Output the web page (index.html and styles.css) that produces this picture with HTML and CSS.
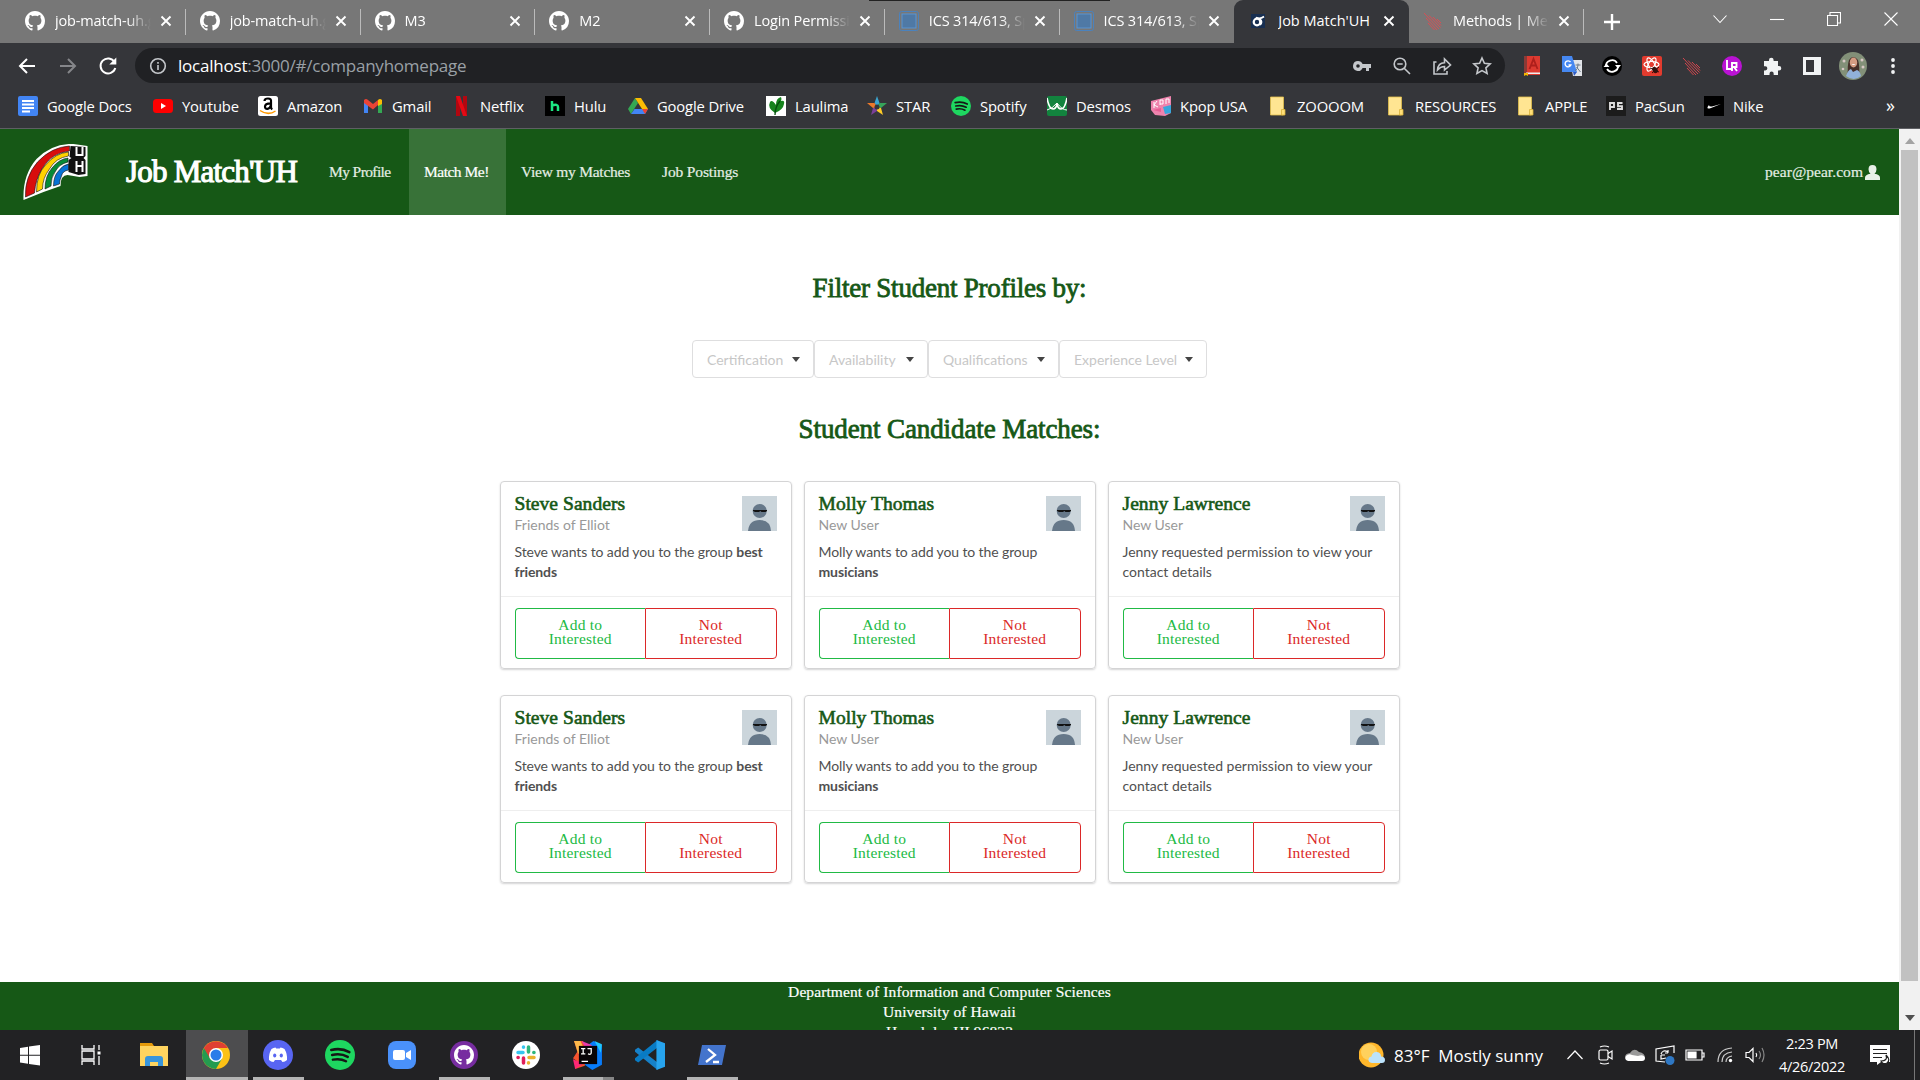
FILE: index.html
```html
<!DOCTYPE html>
<html lang="en">
<head>
<meta charset="utf-8">
<title>Job Match'UH</title>
<link rel="stylesheet" href="styles.css">
</head>
<body>
<svg width="0" height="0" class="defs">
  <symbol id="gh" viewBox="0 0 16 16"><path d="M8 0C3.58 0 0 3.58 0 8c0 3.54 2.29 6.53 5.47 7.59.4.07.55-.17.55-.38 0-.19-.01-.82-.01-1.49-2.01.37-2.53-.49-2.69-.94-.09-.23-.48-.94-.82-1.13-.28-.15-.68-.52-.01-.53.63-.01 1.08.58 1.23.82.72 1.21 1.87.87 2.33.66.07-.52.28-.87.51-1.07-1.78-.2-3.64-.89-3.64-3.95 0-.87.31-1.59.82-2.15-.08-.2-.36-1.02.08-2.12 0 0 .67-.21 2.2.82.64-.18 1.32-.27 2-.27s1.36.09 2 .27c1.53-1.04 2.2-.82 2.2-.82.44 1.1.16 1.92.08 2.12.51.56.82 1.27.82 2.15 0 3.07-1.87 3.75-3.65 3.95.29.25.54.73.54 1.48 0 1.07-.01 1.93-.01 2.2 0 .21.15.46.55.38A8.01 8.01 0 0 0 16 8c0-4.42-3.58-8-8-8z"/></symbol>
  <symbol id="x" viewBox="0 0 12 12"><path d="M1.5 1.5l9 9M10.5 1.5l-9 9" stroke="#fff" stroke-width="1.9" fill="none"/></symbol>
  <symbol id="ics" viewBox="0 0 20 20"><rect x=".5" y=".5" width="19" height="19" rx="2" fill="none" stroke="#4b82bd"/><rect x="3" y="3" width="14" height="14" fill="#4f79a5" stroke="#5b94d0"/></symbol>
  <symbol id="meteor" viewBox="0 0 20 20"><path d="M1 2l15 16M6 4.500l11.500 12M10 6l8 8.500M3 7l11 12M5 12l6.500 7M14 8l4 4" stroke="#e5484f" stroke-width=".9" fill="none"/></symbol>
  <symbol id="spot" viewBox="0 0 24 24"><circle cx="12" cy="12" r="12" fill="#1ed760"/><path d="M5 8q8-2 14.500 1.700M5.700 12q7-1.600 12.500 1.500M6.300 15.700q6-1.200 10.500 1.300" stroke="#161616" stroke-width="2" stroke-linecap="round" fill="none"/></symbol>
  <symbol id="folder" viewBox="0 0 20 20"><path d="M2.500 1h13v18h-13z" fill="#ffe592" stroke="#e3c04d" stroke-width=".8"/><path d="M13.500 13.500H17V19h-3.500z" fill="#ffdf78" stroke="#d9b23a" stroke-width=".8"/></symbol>
  <symbol id="person" viewBox="0 0 35 35"><path d="M0 0h35v35H0z" fill="#cbd5db"/><circle cx="17.700" cy="15" r="7" fill="#667889"/><path d="M6 35q1-11 11.700-11T29 35z" fill="#667889"/><path d="M11 14h14v1l-1.500 1h-4l-1.200-1-1.300 1h-4l-2-1z" fill="#111"/></symbol>
</svg>

<header class="tabs">
  <div class="tab"><svg class="fav"><use href="#gh"/></svg><span>job-match-uh.github.io</span><svg class="x"><use href="#x"/></svg></div>
  <div class="tab"><svg class="fav"><use href="#gh"/></svg><span>job-match-uh.github.io</span><svg class="x"><use href="#x"/></svg></div>
  <div class="tab"><svg class="fav"><use href="#gh"/></svg><span>M3</span><svg class="x"><use href="#x"/></svg></div>
  <div class="tab"><svg class="fav"><use href="#gh"/></svg><span>M2</span><svg class="x"><use href="#x"/></svg></div>
  <div class="tab"><svg class="fav"><use href="#gh"/></svg><span>Login Permissions</span><svg class="x"><use href="#x"/></svg></div>
  <div class="tab"><svg class="fav"><use href="#ics"/></svg><span>ICS 314/613, Spring</span><svg class="x"><use href="#x"/></svg></div>
  <div class="tab before"><svg class="fav"><use href="#ics"/></svg><span>ICS 314/613, Spring</span><svg class="x"><use href="#x"/></svg></div>
  <div class="tab active"><svg class="fav" viewBox="0 0 20 20"><path d="M3 3h14v14H3z" fill="#182f51"/><circle cx="9" cy="11" r="3.300" fill="none" stroke="#fff" stroke-width="2.200"/><path d="M8 6.500q4 2 8-1M12 8q3 3 0 6" stroke="#fff" stroke-width="1.700" fill="none"/></svg><span>Job Match'UH</span><svg class="x"><use href="#x"/></svg></div>
  <div class="tab"><svg class="fav"><use href="#meteor"/></svg><span>Methods | Meteor</span><svg class="x"><use href="#x"/></svg></div>
  <svg class="plus" viewBox="0 0 16 16"><path d="M8 0v16M0 8h16" stroke="#fff" stroke-width="2.400"/></svg>
  <div class="window-buttons">
    <svg viewBox="0 0 14 14"><path d="M.5 3.500L7 10.500l6.500-7"/></svg>
    <svg viewBox="0 0 14 14"><path d="M0 7.500h14"/></svg>
    <svg viewBox="0 0 14 14"><path d="M.5 3.500h10v10H.5zM3 3.500v-3h10.500V11H11"/></svg>
    <svg viewBox="0 0 14 14"><path d="M.5.5l13 13M13.500.5l-13 13"/></svg>
  </div>
  <div class="top-line"></div>
</header>

<div class="toolbar">
  <div class="history">
    <svg viewBox="0 0 20 20"><path d="M18 10H3M10 3l-7 7 7 7"/></svg>
    <svg viewBox="0 0 20 20" class="dim"><path d="M2 10h15M10 3l7 7-7 7"/></svg>
    <svg viewBox="0 0 20 20"><path d="M16.500 6A7.500 7.500 0 1 0 17.300 12"/><path d="M18.300 1.500v7h-7z" fill="#fff" stroke="none"/></svg>
  </div>
  <div class="omnibox">
    <svg viewBox="0 0 18 18" class="info"><circle cx="9" cy="9" r="7.300"/><path d="M9 8v5M9 5v1.700"/></svg>
    <div class="url"><b>localhost</b>:3000/#/companyhomepage</div>
    <svg viewBox="0 0 20 20"><g fill="#c4c7cb" stroke="none"><path fill-rule="evenodd" d="M6 5a5 5 0 1 0 4.600 7H14v3h3v-3h2V8h-8.400A5 5 0 0 0 6 5zm0 3.200a1.800 1.800 0 1 1 0 3.600 1.800 1.800 0 0 1 0-3.600z"/></g></svg>
    <svg viewBox="0 0 20 20"><circle cx="8" cy="8" r="5.800"/><path d="M12.200 12.200L18 18M5.300 8h5.400"/></svg>
    <svg viewBox="0 0 20 20"><path d="M4.500 6H2v12h13v-3M5.500 14q.5-7 7-7.200V3L18.500 9l-6 5v-3.500q-4 0-7 3.500z"/></svg>
    <svg viewBox="0 0 20 20"><path d="M10 2l2.400 5.300 5.800.6-4.300 3.900 1.200 5.700-5.100-2.900-5.100 2.900 1.200-5.700L1.800 7.900l5.800-.6z"/></svg>
  </div>
  <div class="extensions">
    <svg viewBox="0 0 20 20"><path d="M2 0h16v19H2z" fill="#dc3a30"/><path d="M2 0h3v19H2z" fill="#8b3a36"/><path d="M4 16.500h14v1.500H4z" fill="#eee"/><path d="M2 17h4v3l-2-1-2 1z" fill="#f5b400"/><path d="M7.500 13L11.500 3l4 10M9 9.500h5" stroke="#ad1f1b" stroke-width="1.800" fill="none"/></svg>
    <svg viewBox="0 0 20 20"><path d="M8 4h12v16H11z" fill="#e2e5e9"/><path d="M0 0h10l5 16H0z" fill="#4688f1"/><path d="M11 16h4l-3 4z" fill="#2f5bc2"/><path d="M8.500 6a3 3 0 1 0 .4 3H6.500" stroke="#fff" stroke-width="1.400" fill="none"/><path d="M13.500 9h5M16 7.500V9q0 4-3 6M14.500 11l4 5" stroke="#6d7b8b" fill="none"/></svg>
    <svg viewBox="0 0 20 20"><circle cx="10" cy="10" r="10" fill="#000"/><path d="M4 11a6 6 0 0 1 11-4M16 9a6 6 0 0 1-11 4" fill="none" stroke="#fff" stroke-width="1.700"/><path d="M13 9h6l-3 3.500zM1.500 11h6l-3-3.500z" fill="#fff"/></svg>
    <svg viewBox="0 0 20 20"><rect width="20" height="20" rx="2" fill="#e23b2e"/><g fill="none" stroke="#fff" stroke-width="1.200"><ellipse cx="9.500" cy="8.500" rx="7.500" ry="3"/><ellipse cx="9.500" cy="8.500" rx="7.500" ry="3" transform="rotate(60 9.500 8.500)"/><ellipse cx="9.500" cy="8.500" rx="7.500" ry="3" transform="rotate(120 9.500 8.500)"/></g><ellipse cx="13" cy="14" rx="2.400" ry="3.500" fill="#31100d" transform="rotate(-35 13 14)"/><path d="M8 12l9 4M10 17l7-6" stroke="#31100d"/></svg>
    <svg viewBox="0 0 20 20"><use href="#meteor"/></svg>
    <svg viewBox="0 0 20 20"><circle cx="10" cy="10" r="10" fill="#b912d3"/><path d="M5 4v9h5M10 15V7h4.500v4H10M12 11l3 4" stroke="#fff" stroke-width="1.900" fill="none"/></svg>
    <svg viewBox="0 0 20 20"><path d="M2 5h5V4a2.300 2.300 0 0 1 4.600 0v1H16v5h1a2.300 2.300 0 0 1 0 4.600h-1V19h-4.300v-1.300a2.100 2.100 0 0 0-4.200 0V19H2v-4.600h1.300a2 2 0 0 0 0-4.100H2z" fill="#f1f3f4"/></svg>
    <svg viewBox="0 0 20 20"><path fill-rule="evenodd" d="M1 1h18v18H1zm3 3v12h8V4z" fill="#f1f3f4"/></svg>
    <svg viewBox="0 0 28 28" class="avatar"><circle cx="14" cy="14" r="14" fill="#829078"/><path d="M9 25q-1-11 1-17 4-6 9 0 2 6 1 17z" fill="#47302a"/><ellipse cx="14.500" cy="10.500" rx="3.700" ry="5" fill="#d69d83"/><path d="M7 24q2-6 5-7l2 3 4-2q3 1 4 6-7 6-15 0z" fill="#91b1da"/><path d="M12.500 12q2 2 4 0z" fill="#fff"/><g fill="#d8c8c5"><circle cx="5" cy="9" r="1.500"/><circle cx="23" cy="8" r="1.500"/><circle cx="24" cy="15" r="1.500"/><circle cx="4" cy="17" r="1.300"/></g></svg>
    <svg viewBox="0 0 20 20" class="dots"><g fill="#f1f3f4"><circle cx="10" cy="4" r="1.900"/><circle cx="10" cy="10" r="1.900"/><circle cx="10" cy="16" r="1.900"/></g></svg>
  </div>
</div>

<nav class="bookmarks">
  <a><svg viewBox="0 0 20 20"><rect width="20" height="20" rx="2" fill="#4285f4"/><path d="M4 5h12M4 8.500h12M4 12h12M4 15.500h8" stroke="#fff" stroke-width="1.800"/></svg>Google Docs</a>
  <a><svg viewBox="0 0 20 20"><rect y="3" width="20" height="14" rx="3.500" fill="#f00"/><path d="M8 7l5 3-5 3z" fill="#fff"/></svg>Youtube</a>
  <a><svg viewBox="0 0 20 20"><rect width="20" height="20" rx="2.500" fill="#fff"/><path d="M6.500 5q0-2.500 3.500-2.500T13 5.500V11q0 1.500 1.200 2.500M13 7.300q-6 0-6 3.200 0 2.500 2.500 2.300T13 9" fill="none" stroke="#000" stroke-width="2.200"/><path d="M2 14.500q8 5.500 15.500.5" stroke="#f90" stroke-width="1.500" fill="none"/></svg>Amazon</a>
  <a><svg viewBox="0 0 20 20"><path d="M1 4h4v13H1z" fill="#4285f4"/><path d="M15 4h4v13h-4z" fill="#34a853"/><path d="M1 4q2-2 4 0l5 4 5-4v5l-5 4.500L1 7z" fill="#ea4335"/><path d="M15 4q2-2 4 0v4l-4 2z" fill="#fbbc04"/></svg>Gmail</a>
  <a><svg viewBox="0 0 20 20"><path d="M5 0h4v20H5zM12 0h4v20h-4z" fill="#b20710"/><path d="M5 0h4l7 20h-4z" fill="#e50914"/></svg>Netflix</a>
  <a><svg viewBox="0 0 20 20"><path d="M0 0h20v20H0z" fill="#000"/><path d="M7 5v10M7 9.500q6-2 6 1.500v4" stroke="#1ce783" stroke-width="2.500" fill="none"/></svg>Hulu</a>
  <a><svg viewBox="0 0 20 20"><path d="M7 2L0 13l3 5 7-11z" fill="#34a853"/><path d="M7 2h6l7 11h-6z" fill="#fbbc04"/><path d="M3 18l3.500-5H20l-3 5z" fill="#4285f4"/><path d="M14 13h6l-3 5z" fill="#ea4335"/></svg>Google Drive</a>
  <a><svg viewBox="0 0 20 20"><path d="M0 0h20v20H0z" fill="#fff"/><path d="M9 17Q1 12 4 6q2-3 6 3 0-7 5-8 1 2 0 4 4-1 3 3-1 6-9 9z" fill="#16831d"/><path d="M9 19q0-8 5-14" stroke="#054d0d" stroke-width="1.300" fill="none"/></svg>Laulima</a>
  <a><svg viewBox="0 0 20 20"><path d="M10 0l2.500 7L10 11 7.500 7z" fill="#3ba4cf"/><path d="M20 7l-6 5-4-1 2.500-4z" fill="#36a45a"/><path d="M16 19l-6-4v-4l4 1z" fill="#ffcc26"/><path d="M4 19l2-7 4-1v4z" fill="#7b4099"/><path d="M0 7h7.500L10 11l-4 1z" fill="#eb792b"/><circle cx="10" cy="11" r="2.500" fill="#35363a"/></svg>STAR</a>
  <a><svg viewBox="0 0 24 24"><use href="#spot"/></svg>Spotify</a>
  <a><svg viewBox="0 0 20 20"><rect width="20" height="20" rx="2" fill="#12833e"/><path d="M0 2q2 11 6 11 3 0 4-5 1 5 4 5 4 0 6-11" stroke="#fff" stroke-width="1.600" fill="none"/><path d="M0 14q5-1 10-7 5 7 10 7" stroke="#fff" fill="none"/></svg>Desmos</a>
  <a><svg viewBox="0 0 20 20"><path d="M0 5L20 0v17l-6 3-10-1-4-5z" fill="#ee83ad"/><path d="M12 11l8-2v8l-6 1z" fill="#37a6dc"/><path d="M3 6v6M6 5l-3 4 4 2M9 9V4h3v4H9M15 8V3h3v4" stroke="#fff" fill="none"/><path d="M2 14l8-2v4z" fill="#e85d94"/></svg>Kpop USA</a>
  <a><svg><use href="#folder"/></svg>ZOOOOM</a>
  <a><svg><use href="#folder"/></svg>RESOURCES</a>
  <a><svg><use href="#folder"/></svg>APPLE</a>
  <a><svg viewBox="0 0 20 20"><path d="M0 0h20v20H0z" fill="#1c1c1c"/><path d="M4 14V7h4v4H4M16.500 7H12v3.300h4V13h-5" stroke="#ddd" stroke-width="1.900" fill="none"/></svg>PacSun</a>
  <a><svg viewBox="0 0 20 20"><path d="M0 0h20v20H0z" fill="#000"/><path d="M5 9q-4 5 2 3l10-4-9 2.500q-3 .5-3-1.500z" fill="#fff"/></svg>Nike</a>
  <a class="more">»</a>
</nav>

<div class="viewport">
  <main class="page">
    <nav class="site-nav">
      <svg class="logo" viewBox="0 0 64 56">
        <path d="M0 56Q-1 31 13 15 29-1 50 0l14 2v30l-8 1-12-2q-7 0-7 11L20 48z" fill="#fff"/>
        <path d="M2 53Q1 33 14 18 28 3 46 2v5Q28 9 19 24 12 35 11 49z" fill="#d80d0d" stroke="#111" stroke-width=".6"/>
        <path d="M13 48q0-18 9-27Q32 9 45 8v4Q32 14 26 25q-7 9-7 20z" fill="#ffd200" stroke="#111" stroke-width=".6"/>
        <path d="M21.500 45q0-13 7-21 7-9 16-10v4q-9 2-13 10-4 5-4 14z" fill="#078a37" stroke="#111" stroke-width=".6"/>
        <path d="M30 42q0-10 5-15 4-6 10-7v6q-6 1-7 6-2 4-2 8z" fill="#0872d4" stroke="#111" stroke-width=".6"/>
        <path d="M47 2l15 1v9l-2 2 2 2v14l-7 1-10-3V16l3-2-2-1z" fill="#111"/>
        <path d="M53 3v8h6V3M53 17v11M59 17v11M53 22h6" stroke="#fff" stroke-width="2" fill="none"/>
      </svg>
      <h1>Job Match'UH</h1>
      <a class="n1">My Profile</a><a class="n2 current">Match Me!</a><a class="n3">View my Matches</a><a class="n4">Job Postings</a>
      <div class="user"><span>pear@pear.com</span><svg viewBox="0 0 15 15"><path d="M7.500 0q4 0 4 4.300 0 2.700-2 4.500 5.500.8 5.500 4V15H0v-2.200q0-3.200 5.500-4-2-1.800-2-4.500Q3.500 0 7.500 0z"/></svg></div>
    </nav>
    <h2 class="filter-title">Filter Student Profiles by:</h2>
    <div class="filters">
      <div class="f1">Certification<i></i></div><div class="f2">Availability<i></i></div><div class="f3">Qualifications<i></i></div><div class="f4">Experience Level<i></i></div>
    </div>
    <h2 class="match-title">Student Candidate Matches:</h2>
    <section class="cards">
      <article><div class="content"><svg class="face"><use href="#person"/></svg><h3>Steve Sanders</h3><small>Friends of Elliot</small><p class="tight">Steve wants to add you to the group <b>best friends</b></p></div><div class="buttons"><button class="add">Add to<br>Interested</button><button class="not">Not<br>Interested</button></div></article>
      <article><div class="content"><svg class="face"><use href="#person"/></svg><h3>Molly Thomas</h3><small>New User</small><p class="tight">Molly wants to add you to the group <b>musicians</b></p></div><div class="buttons"><button class="add">Add to<br>Interested</button><button class="not">Not<br>Interested</button></div></article>
      <article><div class="content"><svg class="face"><use href="#person"/></svg><h3>Jenny Lawrence</h3><small>New User</small><p>Jenny requested permission to view your contact details</p></div><div class="buttons"><button class="add">Add to<br>Interested</button><button class="not">Not<br>Interested</button></div></article>
      <article><div class="content"><svg class="face"><use href="#person"/></svg><h3>Steve Sanders</h3><small>Friends of Elliot</small><p class="tight">Steve wants to add you to the group <b>best friends</b></p></div><div class="buttons"><button class="add">Add to<br>Interested</button><button class="not">Not<br>Interested</button></div></article>
      <article><div class="content"><svg class="face"><use href="#person"/></svg><h3>Molly Thomas</h3><small>New User</small><p class="tight">Molly wants to add you to the group <b>musicians</b></p></div><div class="buttons"><button class="add">Add to<br>Interested</button><button class="not">Not<br>Interested</button></div></article>
      <article><div class="content"><svg class="face"><use href="#person"/></svg><h3>Jenny Lawrence</h3><small>New User</small><p>Jenny requested permission to view your contact details</p></div><div class="buttons"><button class="add">Add to<br>Interested</button><button class="not">Not<br>Interested</button></div></article>
    </section>
    <footer><span>Department of Information and Computer Sciences</span><br><span>University of Hawaii</span><br><span>Honolulu, HI 96822</span></footer>
  </main>
  <aside class="scroll"><svg viewBox="0 0 10 6"><path d="M5 0l5 6H0z" fill="#a3a3a3"/></svg><div class="thumb"></div><svg viewBox="0 0 10 6"><path d="M0 0h10L5 6z" fill="#505050"/></svg></aside>
</div>

<footer class="taskbar">
  <div class="apps">
    <div><svg viewBox="0 0 28 28"><path d="M4 7l8-1.200v8H4zM13 5.600L24 4v9.800H13zM4 14.800h8v8L4 21.600zM13 14.800h11v9.700l-11-1.500z" fill="#fff"/></svg></div>
    <div><svg viewBox="0 0 28 28"><path d="M4 4v4h12V4M4 24v-4h12v4M4 10h12v8H4zM21 4v5M21 15v9" fill="none" stroke="#fff" stroke-width="1.300"/><path d="M19.500 10.500h3v3h-3z" fill="#fff"/></svg></div>
    <div><svg viewBox="0 0 28 28"><path d="M0 2h12l2 3H0z" fill="#e59a0a"/><path d="M0 5h28v20H0z" fill="#ffd45f"/><path d="M5 25v-7q0-3 3-3h12q3 0 3 3v7h-5v-4h-8v4z" fill="#3895db"/></svg></div>
    <div class="on open"><svg viewBox="0 0 28 28"><circle cx="14" cy="14" r="14" fill="#fbc116"/><path d="M14 14L1.900 7A14 14 0 0 0 14 28l6-10.500z" fill="#249b50"/><path d="M1.900 7A14 14 0 0 1 26 7H14l-6 10.500z" fill="#df4032"/><circle cx="14" cy="14" r="7" fill="#fff"/><circle cx="14" cy="14" r="5.500" fill="#2b7de9"/></svg></div>
    <div class="open"><svg class="round" viewBox="0 0 30 30"><circle cx="15" cy="15" r="15" fill="#5865f2"/><path d="M8.500 9q2-1.500 4-1.500l.7 1h3.600l.7-1q2 0 4 1.500 3 5 2.500 11-2 2-4.500 2L18 20h-6l-1.500 2Q8 22 6 20q-.5-6 2.500-11z" fill="#fff"/><ellipse cx="11.700" cy="15.500" rx="1.600" ry="2" fill="#5865f2"/><ellipse cx="18.300" cy="15.500" rx="1.600" ry="2" fill="#5865f2"/></svg></div>
    <div><svg class="round" viewBox="0 0 24 24"><use href="#spot"/></svg></div>
    <div><svg viewBox="0 0 28 28"><rect width="28" height="28" rx="8" fill="#4a91fa"/><rect x="5" y="9" width="12" height="10" rx="2" fill="#fff"/><path d="M18 12l5-3v10l-5-3z" fill="#fff"/></svg></div>
    <div class="open"><svg viewBox="0 0 28 28"><circle cx="14" cy="14" r="14" fill="#772da0"/><use href="#gh" x="4" y="4" width="20" height="20" fill="#fff"/></svg></div>
    <div><svg viewBox="0 0 28 28"><circle cx="14" cy="14" r="14" fill="#fff"/><g fill="none" stroke-width="3.500" stroke-linecap="round"><path d="M6 11.500h5M11.500 6v.2" stroke="#36c5f0"/><path d="M16.500 6v5M22 11.500h-.2" stroke="#2eb67d"/><path d="M17 16.500h5M16.500 22v-.2" stroke="#ecb22e"/><path d="M11.500 17v5M6 16.500h.2" stroke="#e01e5a"/></g></svg></div>
    <div class="open split"><svg class="round" viewBox="0 0 28 28"><path d="M1 1h8l5 5-3 18-9 3 2-7-4-3 4-6z" fill="#f6532f"/><path d="M1 1h6l3 7-5 5z" fill="#fdb94b"/><path d="M0 18l10 4-8 5z" fill="#fe2775"/><path d="M15 4l4-3 8 4v18l-9 5-7-5z" fill="#087cfa"/><path d="M8 1l10 4-6 3z" fill="#e93cab"/><path d="M20 1l7 3-1 8z" fill="#20c7fb"/><path d="M5.500 5.500h17v17h-17z" fill="#080407"/><path d="M7.500 8h4M9.500 8v5M7.500 13h4M13.500 8h3.500v4q0 2-3 1M8 20h6" stroke="#fff" stroke-width="1.200" fill="none"/></svg></div>
    <div><svg class="round" viewBox="0 0 28 28"><path d="M0 9l3-2 18 14v7L0 11z" fill="#1681c9"/><path d="M0 19l3 2L21 7V0L0 17z" fill="#087bc4"/><path d="M20 0l8 3v22l-8 3z" fill="#27a4ee"/></svg></div>
    <div class="open"><svg viewBox="0 0 28 28"><path d="M4 4h24l-4 20H0z" fill="#4374cc"/><path d="M10 8l7 6-9 7M15 21h6" stroke="#fff" stroke-width="2.300" fill="none"/></svg></div>
  </div>
  <div class="tray">
    <svg class="weather" viewBox="0 0 26 28"><circle cx="12" cy="14" r="12.500" fill="#ffb72b"/><circle cx="10" cy="11" r="8" fill="#ffd15d"/><path d="M13 22q-4-.5-3.500-4 .5-2.500 3-2.500 1-5 5.500-4.500 4 .5 4 4.500 4 0 4 3.500t-4 3z" fill="#bce3fc"/></svg>
    <span class="temp">83°F&nbsp; Mostly sunny</span>
    <svg viewBox="0 0 20 20"><path d="M2.500 14l7.500-8 7.500 8"/></svg>
    <svg viewBox="0 0 20 20"><rect x="4" y="5" width="9" height="10" rx="1.500"/><path d="M13 8.500L17 6v8l-4-2.500M5 2q4.500-2 9 0M5 18q4.500 2 9 0"/></svg>
    <svg viewBox="0 0 20 20"><path d="M1 15q-3-6 4-7 4-6 9-1 6 1 6 6z" fill="#999" stroke="none"/><path d="M3 16q-4-1-2-5 3-3 6-1l6 1q6-2 7 2 0 3-3 3z" fill="#fff" stroke="none"/></svg>
    <svg viewBox="0 0 20 20"><path d="M19 8V1L1 4v12l9 1M6 9q2-5 7-2V5M13 8h-3M6 10h4M6 10v4l5-1"/><circle cx="15" cy="15.500" r="4.500" fill="#2f78c4" stroke="none"/></svg>
    <svg viewBox="0 0 20 20"><path d="M1 5h16v10H1zM17 8h2v4h-2"/><path d="M3 7h8v6H3z" fill="#fff"/></svg>
    <svg viewBox="0 0 20 20"><path d="M3 17Q3 4 17 3M7 17q0-9 10-10M11 17q0-5 6-6" stroke="#ccc"/><circle cx="15.500" cy="15.500" r="1.700" fill="#fff" stroke="none"/></svg>
    <svg viewBox="0 0 20 20"><path d="M1 7.500h3l4-4v13l-4-4H1z"/><path d="M11 8q1.500 2 0 4"/><path d="M14 6q3 4 0 8M17 3q4 7 0 14" stroke="#888"/></svg>
    <div class="clock">2:23 PM<br>4/26/2022</div>
    <svg class="notice" viewBox="0 0 22 22"><path d="M1 1h20v17h-9l-4 3v-3H1z" fill="#fff" stroke="none"/><path d="M4 5.500h14M4 9.500h14M4 13.500h9" stroke="#222"/><path d="M17 11q2 6-5 6 2 4 6 2 4-3-1-8z" fill="#fff" stroke="#222"/></svg>
    <div class="desktop"></div>
  </div>
</footer>
</body>
</html>
```
FILE: styles.css
```css
* { box-sizing: border-box; }
body { margin: 0; width: 1920px; height: 1080px; overflow: hidden; display: flex; flex-direction: column; font-family: "Open Sans", sans-serif; background: #fff; }
svg { display: block; flex: none; }
.defs { display: none; }
h1, h2, h3, p { margin: 0; font-weight: 400; }

.tabs { height: 43px; flex: none; background: #777; display: flex; align-items: center; padding-left: 11px; color: #fff; position: relative; }
.top-line { position: absolute; top: 0; left: 869px; width: 241px; height: 1px; background: #222; }
.tab { width: 174.75px; height: 43px; flex: none; display: flex; align-items: center; padding: 0 14px 1px; position: relative; font-size: 14.500px; letter-spacing: -.15px; }
.tab::after { content: ""; position: absolute; right: 0; top: 9px; width: 1px; height: 26px; background: #bbb; }
.tab .fav { width: 20px; height: 20px; fill: #fff; }
.tab span { width: 96px; margin-left: 10px; padding-bottom: 1px; white-space: nowrap; overflow: hidden; -webkit-mask-image: linear-gradient(90deg, #000 75%, transparent 100%); }
.tab .x { width: 12px; height: 12px; margin-left: 9px; }
.tab.before::after, .tab.active::after { display: none; }
.tab.active { background: #35363a; border-radius: 9px 9px 0 0; }
.tab.active span { -webkit-mask-image: none; letter-spacing: 0; }
.plus { width: 16px; height: 16px; margin-left: 20px; }
.window-buttons { display: flex; gap: 43px; margin-left: auto; margin-right: 22px; padding-bottom: 6px; }
.window-buttons svg { width: 14px; height: 14px; fill: none; stroke: #fff; stroke-width: 1.100; }

.toolbar { height: 46px; flex: none; background: #35363a; display: flex; align-items: center; padding-bottom: 1px; }
.history { display: flex; gap: 20.500px; width: 135px; padding-left: 17px; }
.history svg { width: 20px; height: 20px; fill: none; stroke: #fff; stroke-width: 2; }
.history .dim { stroke: #85868a; }
.omnibox { width: 1370px; height: 35px; border-radius: 18px; background: #202124; display: flex; align-items: center; gap: 20px; padding: 0 13px; }
.omnibox svg { width: 20px; height: 20px; fill: none; stroke: #c4c7cb; stroke-width: 1.600; }
.omnibox .info { width: 18px; height: 18px; margin-left: 1px; }
.url { flex: 1; margin-left: -9px; padding-bottom: 1px; color: #9aa0a6; font-size: 17px; letter-spacing: -.22px; }
.url b { color: #fff; font-weight: 400; }
.extensions { display: flex; align-items: center; gap: 20px; padding-left: 17px; }
.extensions svg { width: 20px; height: 20px; }
.extensions .avatar { width: 28px; height: 28px; margin: 0 -3px 0 -3px; }
.extensions .dots { margin-left: -1px; }

.bookmarks { height: 40px; flex: none; background: #35363a; border-bottom: 1px solid #5f6064; display: grid; grid-template-columns: 135px 105px 105px 88px 94px 83px 138px 101px 84px 96px 104px 117px 118px 130px 90px 98px 182px 20px; padding: 0 0 6px 18px; color: #fff; font-size: 14.800px; letter-spacing: -.15px; }
.bookmarks a { display: flex; align-items: center; gap: 9px; white-space: nowrap; }
.bookmarks svg { width: 20px; height: 20px; }
.bookmarks .more { font-size: 18px; padding-bottom: 2px; }

.viewport { flex: 1; min-height: 0; display: flex; overflow: hidden; }
.page { width: 1899px; font-family: Lato, sans-serif; }
.site-nav { height: 86px; background: #165816; display: flex; align-items: center; color: #e4eee4; font: 15.500px "Liberation Serif", serif; letter-spacing: -.25px; -webkit-text-stroke: .2px; }
.logo { width: 65px; height: 56px; margin-left: 23px; }
.site-nav h1 { width: 171px; margin: 0 17px 0 38px; color: #fff; font-size: 31px; -webkit-text-stroke: 1.1px; letter-spacing: -.78px; white-space: nowrap; }
.site-nav a { height: 86px; display: flex; align-items: center; padding-left: 15px; white-space: nowrap; }
.n1 { width: 95px; letter-spacing: -.6px; } .n2 { width: 97px; letter-spacing: -.5px; } .n3 { width: 141px; } .n4 { width: 106px; letter-spacing: -.15px; }
.site-nav .current { background: #387238; color: #fff; }
.user { margin-left: auto; display: flex; align-items: center; margin-right: 19px; gap: 2px; letter-spacing: 0.05px; }
.user svg { width: 15px; height: 15px; fill: #e8f0e8; }
h2 { text-align: center; color: #165816; font: 27px/34px "Liberation Serif", serif; -webkit-text-stroke: .8px; letter-spacing: -.1px; }
.filter-title { margin-top: 56px; letter-spacing: -.22px; }
.filters { display: flex; justify-content: center; gap: 0; margin-top: 35px; }
.filters div { height: 38px; border: 1px solid #dededf; border-radius: 4px; padding: 0 13px 0 14px; display: flex; align-items: center; justify-content: space-between; color: #c7c7c7; font-size: 14px; }
.f1 { width: 122px; } .f2 { width: 114px; } .f3 { width: 131px; } .f4 { width: 148px; }
.filters i { border: 4px solid transparent; border-top: 5px solid #444; border-bottom: 0; }
.match-title { margin-top: 34px; }
.cards { display: grid; grid-template-columns: repeat(3, 292px); gap: 26px 12px; justify-content: center; margin-top: 35px; }
article { height: 188px; border: 1px solid #d4d4d5; border-radius: 4px; box-shadow: 0 1px 2px #d4d4d5; }
.content { height: 115px; padding: 14px; border-bottom: 1px solid #eee; }
.face { width: 35px; height: 35px; float: right; }
h3 { color: #165816; font: 19.500px/18px "Liberation Serif", serif; -webkit-text-stroke: .6px; letter-spacing: .05px; white-space: nowrap; margin-top: -1px; }
small { display: block; font-size: 14px; line-height: 18px; color: #999; margin-top: 3px; }
article p { clear: left; color: #505050; font-size: 14px; line-height: 20px; margin-top: 8px; margin-right: -6px; }
.tight { letter-spacing: -.11px; }
.buttons { display: flex; padding: 11px 14px; }
button { height: 51px; flex: 1; background: #fff; padding: 0 0 3px; font: 15.500px/14px "Liberation Serif", serif; letter-spacing: .2px; }
.add { border: 1px solid #21ba45; color: #21ba45; border-radius: 4px 0 0 4px; border-right: 0; }
.not { border: 1px solid #db2828; color: #db2828; border-radius: 0 4px 4px 0; }
.page footer { margin-top: 99px; height: 100px; background: #165816; color: #fff; text-align: center; font: 15.500px/20px "Liberation Serif", serif; letter-spacing: .1px; -webkit-text-stroke: .2px; }
.scroll { width: 21px; background: #f1f1f1; display: flex; flex-direction: column; align-items: center; padding: 9px 1px; }
.scroll svg { width: 10px; height: 6px; }
.thumb { width: 17px; height: 831px; flex: none; background: #c1c1c1; margin: 6px 0 34px; }

.taskbar { height: 50px; flex: none; background: #222224; display: flex; color: #fff; justify-content: space-between; }
.apps { display: flex; }
.apps div { width: 62px; display: flex; justify-content: center; align-items: center; position: relative; padding-right: 2px; }
.apps svg { width: 28px; height: 28px; }
.apps .round { width: 30px; height: 30px; }
.apps .on { background: #4d4d4f; }
.apps .open::after { content: ""; position: absolute; left: 5px; right: 6px; bottom: 0; height: 3px; background: #b4b4b4; }
.apps .on::after { left: 0; right: 0; }
.apps .split::after { background: linear-gradient(90deg, #b4b4b4 78%, #868686 78%); }
.tray { display: flex; align-items: center; gap: 10px; }
.tray svg { width: 20px; height: 20px; fill: none; stroke: #fff; stroke-width: 1.200; }
.tray .weather { width: 26px; height: 28px; stroke: none; margin-right: -1px; }
.temp { width: 161px; font-size: 17px; letter-spacing: 0; white-space: nowrap; }
.clock { width: 74px; text-align: center; font-size: 14.500px; line-height: 23px; letter-spacing: -.3px; }
.tray .notice { width: 22px; height: 22px; margin-left: 10px; }
.desktop { width: 6px; height: 50px; border-left: 1px solid #777; margin-left: 13px; }
```
